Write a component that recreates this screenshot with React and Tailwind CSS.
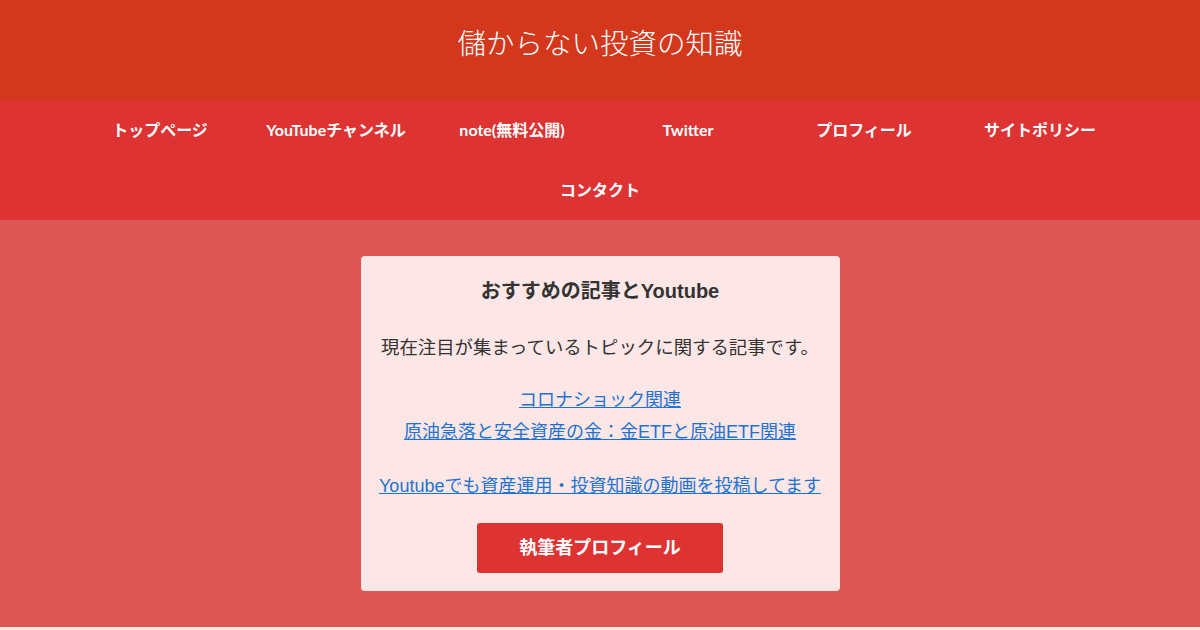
import React from "react";

const navItems = [
  "トップページ",
  "YouTubeチャンネル",
  "note(無料公開)",
  "Twitter",
  "プロフィール",
  "サイトポリシー",
  "コンタクト",
];

const nav = { fontFamily: 'Lato, "Noto Sans CJK JP", sans-serif' };
const body = { fontFamily: '"Liberation Sans", "Noto Sans CJK JP", sans-serif' };

export default function App() {
  return (
    <div className="w-[1200px] h-[630px] bg-[#fde8e8] overflow-hidden">
      <header className="h-[100px] bg-[#d3381c] flex items-center justify-center">
        <h1
          className="text-[28.5px] font-light text-white pb-[16px]"
          style={{ fontFamily: '"Noto Sans CJK JP", sans-serif' }}
        >
          儲からない投資の知識
        </h1>
      </header>

      <nav className="bg-[#dd3333]">
        <ul className="w-[1056px] mx-auto flex flex-wrap justify-center" style={nav}>
          {navItems.map((item) => (
            <li
              key={item}
              className="w-[176px] h-[60px] flex items-center justify-center text-white text-[16px] font-bold"
            >
              {item}
            </li>
          ))}
        </ul>
      </nav>

      <main className="h-[407px] bg-[#dd5757] pt-[36px]">
        <div
          className="w-[479px] h-[335px] mx-auto bg-[#fce6e6] rounded-[4px] flex flex-col items-center pt-[22px] text-[#333333]"
          style={body}
        >
          <h2 className="text-[20px] font-bold leading-[26px]">おすすめの記事とYoutube</h2>
          <p className="text-[18.4px] leading-[32px] mt-[28px]">
            現在注目が集まっているトピックに関する記事です。
          </p>
          <div className="flex flex-col items-center mt-[20px] text-[18px] leading-[32px] text-[#1e73d0] underline">
            <a href="#">コロナショック関連</a>
            <a href="#">原油急落と安全資産の金：金ETFと原油ETF関連</a>
            <a href="#" className="mt-[22px]">
              Youtubeでも資産運用・投資知識の動画を投稿してます
            </a>
          </div>
          <button className="mt-[21px] w-[246px] h-[50px] rounded-[3px] bg-[#dd3333] text-white text-[18px] font-bold">
            執筆者プロフィール
          </button>
        </div>
      </main>
    </div>
  );
}
